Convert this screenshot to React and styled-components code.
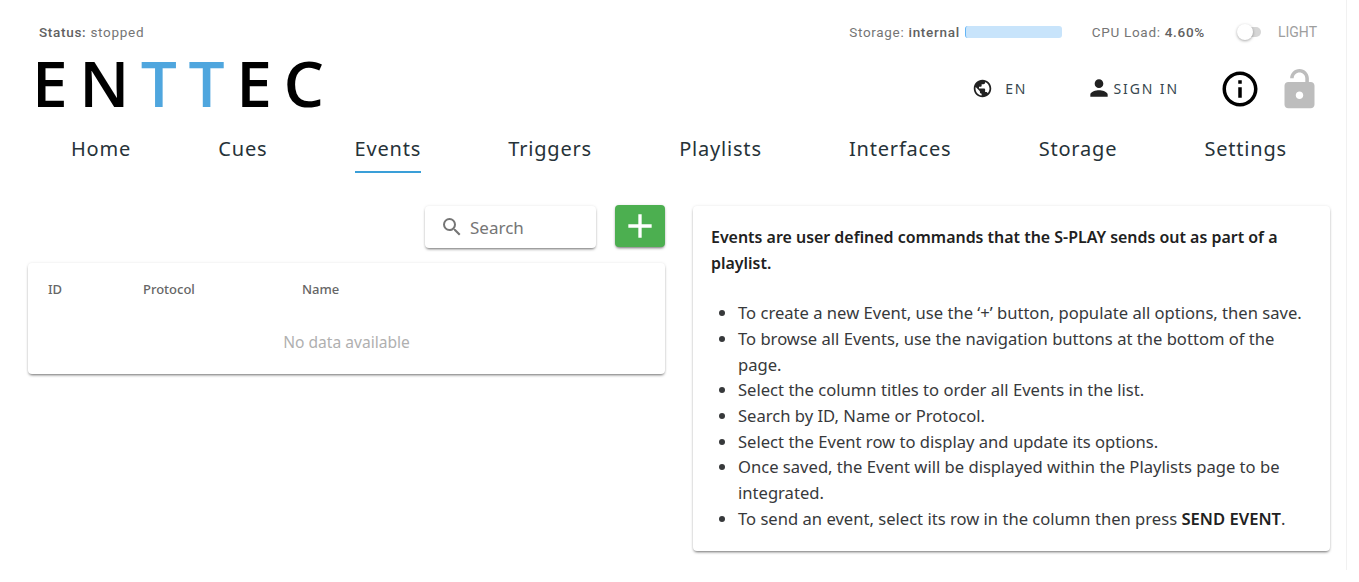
import React from 'react';
import styled, { createGlobalStyle } from 'styled-components';
import { MdPublic, MdPerson, MdInfoOutline, MdSearch, MdAdd } from 'react-icons/md';

const GlobalStyle = createGlobalStyle`
    html, body {
        margin : 0;
        background : #fff;
        overflow : hidden;
    }
    body {
        font-family : Roboto, "Liberation Sans", sans-serif;
        color : #212121;
    }
`;

const cardShadow = '0 2px 3px -1px rgba(0,0,0,.55), 0 0 3px rgba(0,0,0,.1)';

const Page = styled.div`
    width : 1347px;
    height : 570px;
    box-sizing : border-box;
    padding : 0 16px 0 28px;
    border-right : 1px solid #f1f1f1;
`;

const StatusBar = styled.div`
    display : flex;
    align-items : center;
    height : 24px;
    padding : 20px 13px 0 11px;
    font-size : 13.5px;
    letter-spacing : 0.7px;
    color : #757575;
    b { font-weight : 500; color : #616161; }
`;

const Spacer = styled.div`
    flex : 1;
`;

const StorageBar = styled.div`
    width : 97px;
    height : 12px;
    margin : 0 30px 0 5px;
    border-radius : 3px;
    border-left : 1px solid #64b5f6;
    box-sizing : border-box;
    background : #c8e4fb;
`;

const Toggle = styled.div`
    position : relative;
    width : 20px;
    height : 10px;
    margin : 0 17px 0 36px;
    border-radius : 5px;
    background : #d6d6d6;
    &::before {
        content : '';
        position : absolute;
        left : -4px;
        top : -3px;
        width : 16px;
        height : 16px;
        border-radius : 50%;
        background : #fff;
        box-shadow : 0 1px 3px rgba(0,0,0,.35);
    }
`;

const ToggleLabel = styled.span`
    color : #9e9e9e;
    letter-spacing : 0;
    font-size : 14px;
`;

const BrandRow = styled.div`
    display : flex;
    align-items : center;
    height : 60px;
    margin-top : 15px;
    padding : 0 15px 0 4px;
`;

const Logo = styled.div`
    margin-bottom : 12px;
    font-family : "Open Sans", sans-serif;
    font-weight : 600;
    font-size : 64px;
    line-height : 60px;
    letter-spacing : 11.5px;
    color : #000;
    span { color : #4fa6de; }
`;

const HeaderButton = styled.div`
    display : flex;
    align-items : center;
    gap : ${p => p.$gap}px;
    margin : 0 ${p => p.$right}px 2px 0;
    font-family : "Noto Sans", sans-serif;
    font-size : 14px;
    letter-spacing : 1.9px;
    color : #37474f;
    svg { color : #212121; }
`;

const InfoIcon = styled(MdInfoOutline)`
    margin-right : 23px;
    color : #000;
`;

const LockIcon = styled.svg`
    width : 45px;
    height : 45px;
    margin : 0 -7px;
    fill : #bdbdbd;
`;

const Nav = styled.nav`
    display : flex;
    justify-content : space-between;
    margin-top : 11px;
    padding : 0 43px 0 43px;
`;

const NavItem = styled.a`
    padding : 2px 0 9px;
    margin-top : 3px;
    font-family : "Noto Sans", sans-serif;
    font-size : 20px;
    line-height : 27px;
    letter-spacing : 0.8px;
    color : #263238;
    border-bottom : 2px solid ${p => p.$active ? '#3a9fd8' : 'transparent'};
`;

const Columns = styled.div`
    display : grid;
    grid-template-columns : 637px 637px;
    column-gap : 28px;
    margin-top : 32px;
`;

const Toolbar = styled.div`
    display : flex;
    justify-content : flex-end;
    align-items : flex-start;
    gap : 19px;
`;

const SearchBox = styled.div`
    display : flex;
    align-items : center;
    gap : 6px;
    width : 171px;
    height : 42px;
    box-sizing : border-box;
    padding-left : 15px;
    margin-top : 1px;
    border-radius : 4px;
    background : #fff;
    box-shadow : ${cardShadow};
    font-family : "Noto Sans", sans-serif;
    font-size : 17px;
    color : #757575;
`;

const AddButton = styled.div`
    display : flex;
    align-items : center;
    justify-content : center;
    width : 50px;
    height : 42px;
    border-radius : 4px;
    background : #4caf50;
    color : #fff;
    box-shadow : ${cardShadow};
`;

const Card = styled.div`
    background : #fff;
    border-radius : 4px;
    box-shadow : ${cardShadow};
`;

const TableCard = styled(Card)`
    height : 111px;
    margin-top : 15px;
    box-sizing : border-box;
    padding-top : 18px;
`;

const HeadRow = styled.div`
    display : grid;
    grid-template-columns : 95px 159px 1fr;
    padding-left : 20px;
    font-family : "Noto Sans", sans-serif;
    font-size : 13px;
    font-weight : 500;
    line-height : 16px;
    color : #666;
`;

const Empty = styled.div`
    margin-top : 35px;
    text-align : center;
    font-family : "Noto Sans", sans-serif;
    font-size : 15.6px;
    line-height : 20px;
    color : #b0b0b0;
`;

const InfoCard = styled(Card)`
    height : 345px;
    margin-top : 1px;
    box-sizing : border-box;
    padding : 19px 18px 0;
    font-family : "Noto Sans", sans-serif;
    font-size : 16.6px;
    line-height : 25.7px;
    color : #37393b;
`;

const Lead = styled.p`
    margin : 0 0 23.7px;
    font-size : 15.95px;
    font-weight : 600;
    color : #212121;
`;

const Bullets = styled.ul`
    margin : 0;
    padding-left : 27px;
    b { font-weight : 600; color : #212121; }
`;

const tabs = ['Home', 'Cues', 'Events', 'Triggers', 'Playlists', 'Interfaces', 'Storage', 'Settings'];

export default function App() {
    return (
        <>
            <GlobalStyle />
            <Page>
                <StatusBar>
                    <span><b>Status:</b> stopped</span>
                    <Spacer />
                    <span>Storage: <b>internal</b></span>
                    <StorageBar />
                    <span>CPU Load: <b>4.60%</b></span>
                    <Toggle />
                    <ToggleLabel>LIGHT</ToggleLabel>
                </StatusBar>
                <BrandRow>
                    <Logo>EN<span>TT</span>EC</Logo>
                    <Spacer />
                    <HeaderButton $gap={12} $right={59}><MdPublic size={21} />EN</HeaderButton>
                    <HeaderButton $gap={1} $right={40}><MdPerson size={26} />SIGN IN</HeaderButton>
                    <InfoIcon size={42} />
                    <LockIcon viewBox="0 0 24 24">
                        <path d="M18 8h-1V6c0-2.76-2.24-5-5-5S7 3.24 7 6h1.9c0-1.71 1.39-3.1 3.1-3.1 1.71 0 3.1 1.39 3.1 3.1v2H6c-1.1 0-2 .9-2 2v10c0 1.1.9 2 2 2h12c1.1 0 2-.9 2-2V10c0-1.1-.9-2-2-2zm-6 9c-1.1 0-2-.9-2-2s.9-2 2-2 2 .9 2 2-.9 2-2 2z" />
                    </LockIcon>
                </BrandRow>
                <Nav>
                    {tabs.map(t => <NavItem key={t} $active={t === 'Events'}>{t}</NavItem>)}
                </Nav>
                <Columns>
                    <div>
                        <Toolbar>
                            <SearchBox><MdSearch size={24} />Search</SearchBox>
                            <AddButton><MdAdd size={40} /></AddButton>
                        </Toolbar>
                        <TableCard>
                            <HeadRow><span>ID</span><span>Protocol</span><span>Name</span></HeadRow>
                            <Empty>No data available</Empty>
                        </TableCard>
                    </div>
                    <InfoCard>
                        <Lead>Events are user defined commands that the S-PLAY sends out as part of a playlist.</Lead>
                        <Bullets>
                            <li>To create a new Event, use the ‘+’ button, populate all options, then save.</li>
                            <li>To browse all Events, use the navigation buttons at the bottom of the page.</li>
                            <li>Select the column titles to order all Events in the list.</li>
                            <li>Search by ID, Name or Protocol.</li>
                            <li>Select the Event row to display and update its options.</li>
                            <li>Once saved, the Event will be displayed within the Playlists page to be integrated.</li>
                            <li>To send an event, select its row in the column then press <b>SEND EVENT</b>.</li>
                        </Bullets>
                    </InfoCard>
                </Columns>
            </Page>
        </>
    );
}
